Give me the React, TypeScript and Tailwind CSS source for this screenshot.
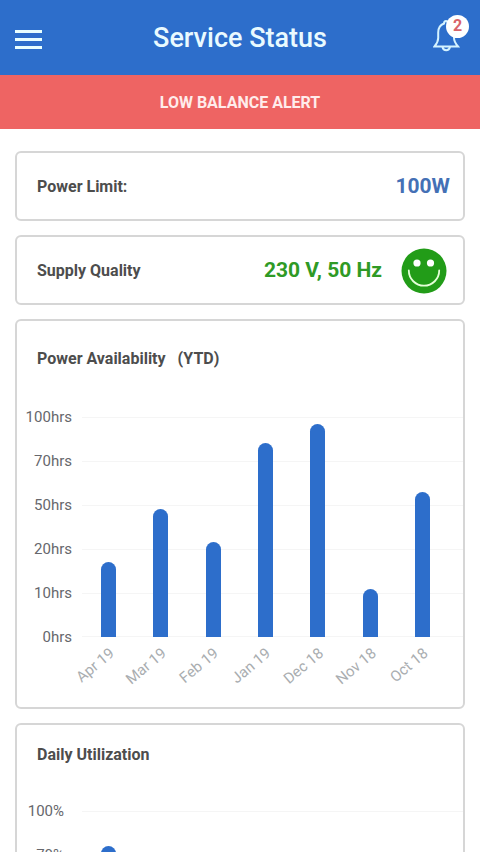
import React from 'react';

type Bar = { label: string; value: number };

const availability: Bar[] = [
  { label: 'Apr 19', value: 34 },
  { label: 'Mar 19', value: 58 },
  { label: 'Feb 19', value: 43 },
  { label: 'Jan 19', value: 88 },
  { label: 'Dec 18', value: 97 },
  { label: 'Nov 18', value: 22 },
  { label: 'Oct 18', value: 66 },
];

const utilization: Bar[] = [
  { label: 'Mon', value: 84 },
  { label: 'Tue', value: 58 },
  { label: 'Wed', value: 43 },
  { label: 'Thu', value: 71 },
  { label: 'Fri', value: 65 },
  { label: 'Sat', value: 22 },
  { label: 'Sun', value: 50 },
];

function Card({ children, className = '' }: { children: React.ReactNode; className?: string }) {
  return (
    <section className={`bg-white border-2 border-[#d6d6d6] rounded-md ${className}`}>
      {children}
    </section>
  );
}

// ticks go from the top line down to the base line
function BarChart({ ticks, bars, tickClass }: { ticks: string[]; bars: Bar[]; tickClass: string }) {
  return (
    <div className="flex">
      <div className={`w-[65px] shrink-0 text-right text-[15px] text-[#66676c] ${tickClass}`}>
        {ticks.map(tick => (
          <div key={tick} className="h-11 flex items-center justify-end">{tick}</div>
        ))}
      </div>

      <div className="flex-1 pt-[22px]">
        <div className="grid">
          <div className="col-start-1 row-start-1">
            {ticks.slice(1).map(tick => (
              <div key={tick} className="h-11 border-t border-[#f5f5f5] last:border-b"></div>
            ))}
          </div>
          <div className="col-start-1 row-start-1 grid grid-cols-7 pr-3.5">
            {bars.map(bar => (
              <div key={bar.label} className="flex items-end justify-center">
                <div
                  className="w-[15px] bg-[#2d6ecb] rounded-t-full"
                  style={{ height: `${bar.value}%` }}
                ></div>
              </div>
            ))}
          </div>
        </div>
        <div className="grid grid-cols-7 pr-3.5 pt-1.5">
          {bars.map(bar => (
            <div key={bar.label} className="flex justify-end pr-[23px] text-[15px] leading-4 text-[#a9adb0]">
              <span className="whitespace-nowrap origin-right -rotate-40">{bar.label}</span>
            </div>
          ))}
        </div>
      </div>
    </div>
  );
}

function BellIcon() {
  return (
    <svg viewBox="0 0 32 34" className="w-8 h-[34px]" fill="none" stroke="#d5f3ff" strokeWidth="2" strokeLinejoin="miter" strokeLinecap="round">
      <path d="M11 4.500C11 3 12 2 13 2s2 1 2 2.500C19 6 21 9.500 21 13.500V19c0 3 1.500 5.500 4 8.500H1.500C4 24.500 5.200 22 5.200 19v-5.500C5.200 9.500 7 6 11 4.500z" />
      <path d="M9.500 28c.4 2.200 1.800 3.300 3.700 3.300s3.300-1.100 3.700-3.300" />
    </svg>
  );
}

function SmileIcon() {
  return (
    <svg viewBox="0 0 46 46" className="w-[46px] h-[46px]" role="img" aria-label="Good">
      <circle cx="23" cy="23" r="22.500" fill="#229c18" />
      <circle cx="16" cy="15" r="3.600" fill="#fff" />
      <circle cx="29.500" cy="15" r="3.600" fill="#fff" />
      <path d="M7.800 22.500a15.200 15.200 0 0 0 30.400 0" fill="none" stroke="#e4ffd8" strokeWidth="1.800" strokeLinecap="round" />
    </svg>
  );
}

export default function App() {
  return (
    <div className="min-h-screen bg-white font-[Roboto,'Liberation_Sans',sans-serif]">
      <header className="h-[75px] grid grid-cols-[1fr_auto_1fr] items-center px-[15px] bg-[#2d6ecb]">
        <button type="button" aria-label="Menu" className="w-[27px] flex flex-col gap-[5px] pt-1">
          <span className="h-[3px] bg-[#e9ffff]"></span>
          <span className="h-[3px] bg-[#e9ffff]"></span>
          <span className="h-[3px] bg-[#e9ffff]"></span>
        </button>
        <h1 className="text-[27px] leading-8 font-medium text-[#e9faff]">Service Status</h1>
        <button type="button" aria-label="Notifications" className="relative justify-self-end pb-1">
          <BellIcon />
          <span className="absolute -top-1 -right-1 w-[23px] h-[23px] rounded-full bg-white text-[#d8646a] text-base font-bold flex items-center justify-center">2</span>
        </button>
      </header>

      <div role="alert" className="h-[54px] flex items-center justify-center pt-0.5 bg-[#ee6463] text-base font-bold text-[#ffeceb]">
        LOW BALANCE ALERT
      </div>

      <main className="flex flex-col gap-[14px] px-[15px] pt-[22px] pb-4">
        <Card className="h-[70px] flex items-center justify-between pt-0.5 pl-5 pr-[13px]">
          <h2 className="text-base font-bold text-[#4d4d4d]">Power Limit:</h2>
          <span className="text-[21px] font-bold text-[#4470b5]">100W</span>
        </Card>

        <Card className="h-[70px] flex items-center pt-0.5 pl-5 pr-4">
          <h2 className="flex-1 text-base font-bold text-[#4d4d4d]">Supply Quality</h2>
          <span className="text-[21px] font-bold text-[#2f9a25] pr-[19px]">230 V, 50 Hz</span>
          <SmileIcon />
        </Card>

        <Card className="h-[390px] pt-[26px]">
          <h2 className="flex gap-3 pl-5 pb-6 text-base font-bold text-[#4d4d4d]">
            <span>Power Availability</span>
            <span>(YTD)</span>
          </h2>
          <BarChart
            ticks={['100hrs', '70hrs', '50hrs', '20hrs', '10hrs', '0hrs']}
            bars={availability}
            tickClass="pr-2.5"
          />
        </Card>

        <Card className="h-[390px] pt-[18px]">
          <h2 className="pl-5 pb-[22px] text-base font-bold text-[#4d4d4d]">Daily Utilization</h2>
          <BarChart
            ticks={['100%', '70%', '50%', '20%', '10%', '0%']}
            bars={utilization}
            tickClass="pr-[18px]"
          />
        </Card>
      </main>
    </div>
  );
}
